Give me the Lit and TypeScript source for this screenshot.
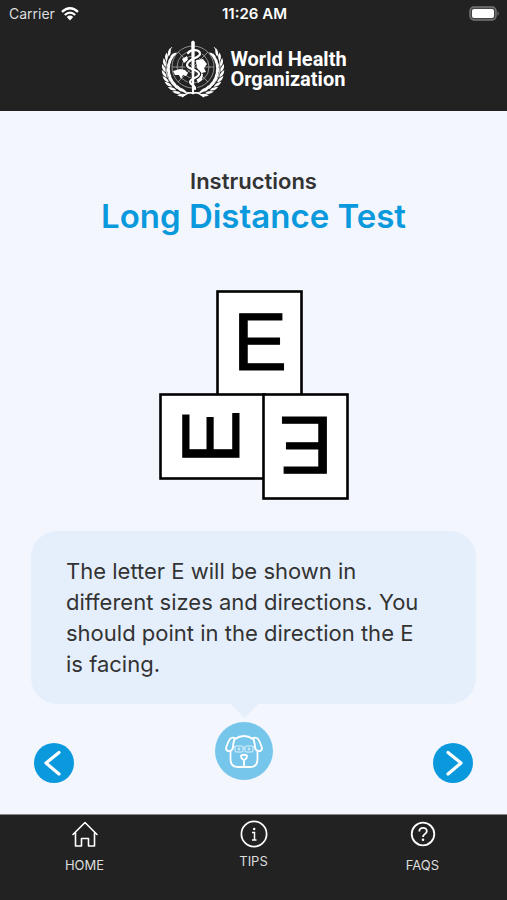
import { LitElement, html, svg, css } from "lit";
import { customElement } from "lit/decorators.js";

const range = (n: number) => Array.from({ length: n }, (_, i) => i);

/** One side of the olive wreath: pairs of leaves along an arc. */
const wreathSide = (mirror: boolean) => svg`
  <g transform=${mirror ? "translate(66 0) scale(-1 1)" : ""}>
    <path d="M33 54 C20 54 6 45 6 28 C6 20 8 13 12 8" fill="none" stroke="#fff" stroke-width="0.8"/>
    ${range(10).map((i) => {
      const angle = 112 + i * 11.5;
      const rad = (angle * Math.PI) / 180;
      const at = (r: number) => `translate(${33 + r * Math.cos(rad)} ${30 + (r - 1) * Math.sin(rad)})`;
      return svg`
        <path d="M-4 0Q0 -3 5 0Q0 2.400 -4 0Z" fill="#fff" transform=${`${at(24.5)} rotate(${angle + 108})`}/>
        <path d="M-4 0Q0 -3 5 0Q0 2.400 -4 0Z" fill="#fff" transform=${`${at(29)} rotate(${angle + 66})`}/>`;
    })}
  </g>`;

const emblem = html`
  <svg class="emblem" viewBox="0 0 66 60" aria-hidden="true">
    <g fill="none" stroke="#aaa" stroke-width="0.8">
      <circle cx="33" cy="28" r="21"/>
      <circle cx="33" cy="28" r="16"/>
      <circle cx="33" cy="28" r="11"/>
      <circle cx="33" cy="28" r="6"/>
      <path d="M12 28H54M33 7V49M18 13L48 43M48 13L18 43"/>
    </g>
    <path fill="#fff" d="M13 32L20 30L25 31L28 34L26 37L23 36L21 40L19 36L15 36ZM36 21L43 20L47 25L44 29L46 33L41 34L37 29ZM37 33L43 35L42 41L38 44L36 39ZM22 20L27 17L28 21L24 24Z"/>
    ${wreathSide(false)}
    ${wreathSide(true)}
    <path d="M22 58Q29 52 33 54.500Q37 52 44 58" fill="none" stroke="#fff" stroke-width="1.6"/>
    <path d="M28 14C31 10 40 10 40 15C40 19 27 20 27 26C27 31 39 30 39 35C39 39 30 39 30 43C30 46 36 46 35 50"
      fill="none" stroke="#222" stroke-width="4.4"/>
    <path d="M28 14C31 10 40 10 40 15C40 19 27 20 27 26C27 31 39 30 39 35C39 39 30 39 30 43C30 46 36 46 35 50"
      fill="none" stroke="#fff" stroke-width="2.2" stroke-linecap="round"/>
    <path d="M31.200 3Q33 0 34.800 3L34 54H32Z" fill="#fff"/>
  </svg>`;

const wifiIcon = html`
  <svg class="wifi" viewBox="0 0 18 14" aria-hidden="true">
    <g fill="none" stroke="#fff" stroke-width="2.3">
      <path d="M1 4.8Q9-2.4 17 4.8"/>
      <path d="M3.8 8Q9 3.2 14.2 8"/>
    </g>
    <path d="M5.8 10Q9 7.2 12.2 10L9 13.6Z" fill="#fff"/>
  </svg>`;

const batteryIcon = html`
  <svg class="battery" viewBox="0 0 31 15" role="img" aria-label="Battery full">
    <rect x="1" y="1" width="26" height="13" rx="4" fill="#444" stroke="#777" stroke-width="1.4"/>
    <rect x="3" y="3" width="22" height="9" rx="2" fill="#fff"/>
    <path d="M28.500 5Q31 7.500 28.500 10Z" fill="#777"/>
  </svg>`;

const optotypes = html`
  <svg class="optotypes" viewBox="0 0 190 211" role="img" aria-label="Three cards with the letter E in different directions">
    <g fill="#fff" stroke="#000" stroke-width="2.6">
      <rect x="58.500" y="1.500" width="84" height="104"/>
      <rect x="1.500" y="104.500" width="104" height="84"/>
      <rect x="104.500" y="104.500" width="84" height="104"/>
    </g>
    <g class="letter">
      <text transform="translate(74 80)">E</text>
      <text transform="translate(80 174) rotate(-90)">E</text>
      <text transform="translate(174 127) rotate(180)">E</text>
    </g>
  </svg>`;

const dogIcon = html`
  <svg class="dog" viewBox="0 0 58 58" role="img" aria-label="Guide dog">
    <circle cx="29" cy="29" r="29" fill="#76c6ec"/>
    <g fill="none" stroke="#fff" stroke-width="1.8" stroke-linecap="round" stroke-linejoin="round">
      <path d="M20 17Q29 11 38 17"/>
      <path d="M20 16C14 14 13 21 11 26C11 30 16 30 17.500 27C18.500 23 18 20 20 16Z"/>
      <path d="M38 16C44 14 45 21 47 26C47 30 42 30 40.500 27C39.500 23 40 20 38 16Z"/>
      <path d="M15.500 30V37Q15.500 45 23 45H35Q42.500 45 42.500 37V30"/>
      <path d="M26 33.500Q29 32 32 33.500Q32 37 29 38Q26 37 26 33.500ZM29 38V44"/>
    </g>
    <g fill="none" stroke="#fff" stroke-opacity="0.75" stroke-width="1">
      <rect x="20" y="24" width="8" height="6" rx="1"/>
      <rect x="30" y="24" width="8" height="6" rx="1"/>
      <path d="M28 26H30M17 25H20M38 25H41M22.500 27H25.500M32.500 27H35.500M24 25.500V28.500M34 25.500V28.500"/>
    </g>
  </svg>`;

const arrow = (d: string) => html`
  <svg viewBox="0 0 40 40" aria-hidden="true">
    <path d=${d} fill="none" stroke="#fff" stroke-width="3.2" stroke-linecap="round" stroke-linejoin="round"/>
  </svg>`;

const homeIcon = html`
  <svg class="tab-icon" viewBox="0 0 28 28" aria-hidden="true">
    <path d="M2 14.500L14 2.500L26 14.500M4.500 13V26H10.500V18.500H17.500V26H23.500V13"
      fill="none" stroke="#fff" stroke-width="1.6" stroke-linejoin="round" stroke-linecap="round"/>
  </svg>`;

const tipsIcon = html`
  <svg class="tab-icon" viewBox="0 0 28 28" aria-hidden="true">
    <circle cx="14" cy="14" r="12.600" fill="none" stroke="#fff" stroke-width="1.7"/>
    <path d="M12 12.500H14.500V20M12 20H16.500" fill="none" stroke="#fff" stroke-width="1.5"/>
    <circle cx="14.200" cy="9" r="1.200" fill="#fff"/>
  </svg>`;

const faqIcon = html`
  <svg class="tab-icon" viewBox="0 0 28 28" aria-hidden="true">
    <circle cx="14" cy="14" r="11.300" fill="none" stroke="#fff" stroke-width="1.800"/>
    <path d="M10.300 11.500C10.300 6.500 18 6.700 17.800 11.300C17.700 14 14 13.800 14 17"
      fill="none" stroke="#fff" stroke-width="1.800"/>
    <circle cx="14" cy="19.800" r="1.300" fill="#fff"/>
  </svg>`;

@customElement("app-root")
export class AppRoot extends LitElement {
  static styles = css`
    :host {
      display: flex;
      flex-direction: column;
      min-height: 100vh;
      background: #f4f6fe;
      color: #333;
      font-family: Inter, "Liberation Sans", sans-serif;
    }
    * { box-sizing: border-box; }
    svg { display: block; flex: none; }
    h1, p { margin: 0; }

    .top { background: #222; color: #fff; padding-bottom: 12px; }
    .status {
      display: grid;
      grid-template-columns: 1fr auto 1fr;
      align-items: center;
      height: 27px;
      padding: 0 7px 0 9px;
      font-size: 14px;
    }
    .carrier { display: flex; align-items: center; gap: 6px; color: #ddd; }
    .time { font-size: 15px; font-weight: 600; }
    .wifi { width: 18px; height: 14px; }
    .battery { width: 31px; height: 15px; justify-self: end; }
    .brand {
      display: flex;
      justify-content: center;
      align-items: center;
      gap: 4px;
      padding-top: 12px;
    }
    .emblem { width: 66px; height: 60px; }
    .brand-name {
      font-family: Roboto, "Liberation Sans", sans-serif;
      font-weight: 700;
      font-size: 20px;
      line-height: 20px;
    }
    .brand-name span { display: block; }

    main { flex: 1; display: flex; flex-direction: column; padding-top: 55px; }
    .heading { text-align: center; }
    .eyebrow { font-size: 22px; line-height: 30px; font-weight: 600; }
    h1 { font-size: 33px; line-height: 40px; font-weight: 600; color: #0a99dc; }
    .optotypes { width: 190px; height: 211px; margin: 54px auto 30px; }
    .letter {
      font-family: "Liberation Sans", Arial, sans-serif;
      font-size: 81px;
      stroke: #000;
      stroke-width: 1px;
    }
    .bubble {
      margin: 0 31px;
      padding: 25px 48px 24px 35px;
      border-radius: 26px;
      background: #e5effb;
      font-size: 22px;
      line-height: 31px;
    }
    .controls {
      display: grid;
      grid-template-columns: 10fr 58px 11fr;
      align-items: end;
      padding: 0 34px 31px;
    }
    .guide {
      display: flex;
      flex-direction: column;
      align-items: center;
      gap: 4px;
      padding-bottom: 3px;
    }
    .pointer {
      width: 28px;
      height: 14px;
      background: #e5effb;
      clip-path: polygon(0 0, 100% 0, 50% 100%);
    }
    .dog { width: 58px; height: 58px; }
    .step {
      width: 40px;
      height: 40px;
      padding: 0;
      border: 0;
      border-radius: 50%;
      background: #0a99dc;
      cursor: pointer;
    }
    .next { justify-self: end; }

    .tabs {
      display: grid;
      grid-template-columns: repeat(3, 1fr);
      height: 86px;
      border-top: 1px solid #888;
      background: #222;
    }
    .tab {
      display: flex;
      flex-direction: column;
      align-items: center;
      gap: 8px;
      padding-top: 5px;
      color: #ddd;
      font-size: 13px;
      line-height: 18px;
      text-decoration: none;
    }
    .tight { gap: 4px; }
    .tab-icon { width: 28px; height: 28px; }
  `;

  render() {
    return html`
      <header class="top">
        <div class="status">
          <span class="carrier">Carrier ${wifiIcon}</span>
          <span class="time">11:26 AM</span>
          ${batteryIcon}
        </div>
        <div class="brand">
          ${emblem}
          <div class="brand-name"><span>World Health</span><span>Organization</span></div>
        </div>
      </header>
      <main>
        <div class="heading">
          <p class="eyebrow">Instructions</p>
          <h1>Long Distance Test</h1>
        </div>
        ${optotypes}
        <p class="bubble">
          The letter E will be shown in different sizes and directions. You
          should point in the direction the E is facing.
        </p>
        <div class="controls">
          <button class="step" aria-label="Previous">${arrow("M25 9.500L12 20L25 31")}</button>
          <div class="guide">
            <span class="pointer"></span>
            ${dogIcon}
          </div>
          <button class="step next" aria-label="Next">${arrow("M15 9.500L28 20L15 31")}</button>
        </div>
      </main>
      <nav class="tabs">
        <a class="tab" href="#home">${homeIcon}<span>HOME</span></a>
        <a class="tab tight" href="#tips">${tipsIcon}<span>TIPS</span></a>
        <a class="tab" href="#faqs">${faqIcon}<span>FAQS</span></a>
      </nav>
    `;
  }
}
